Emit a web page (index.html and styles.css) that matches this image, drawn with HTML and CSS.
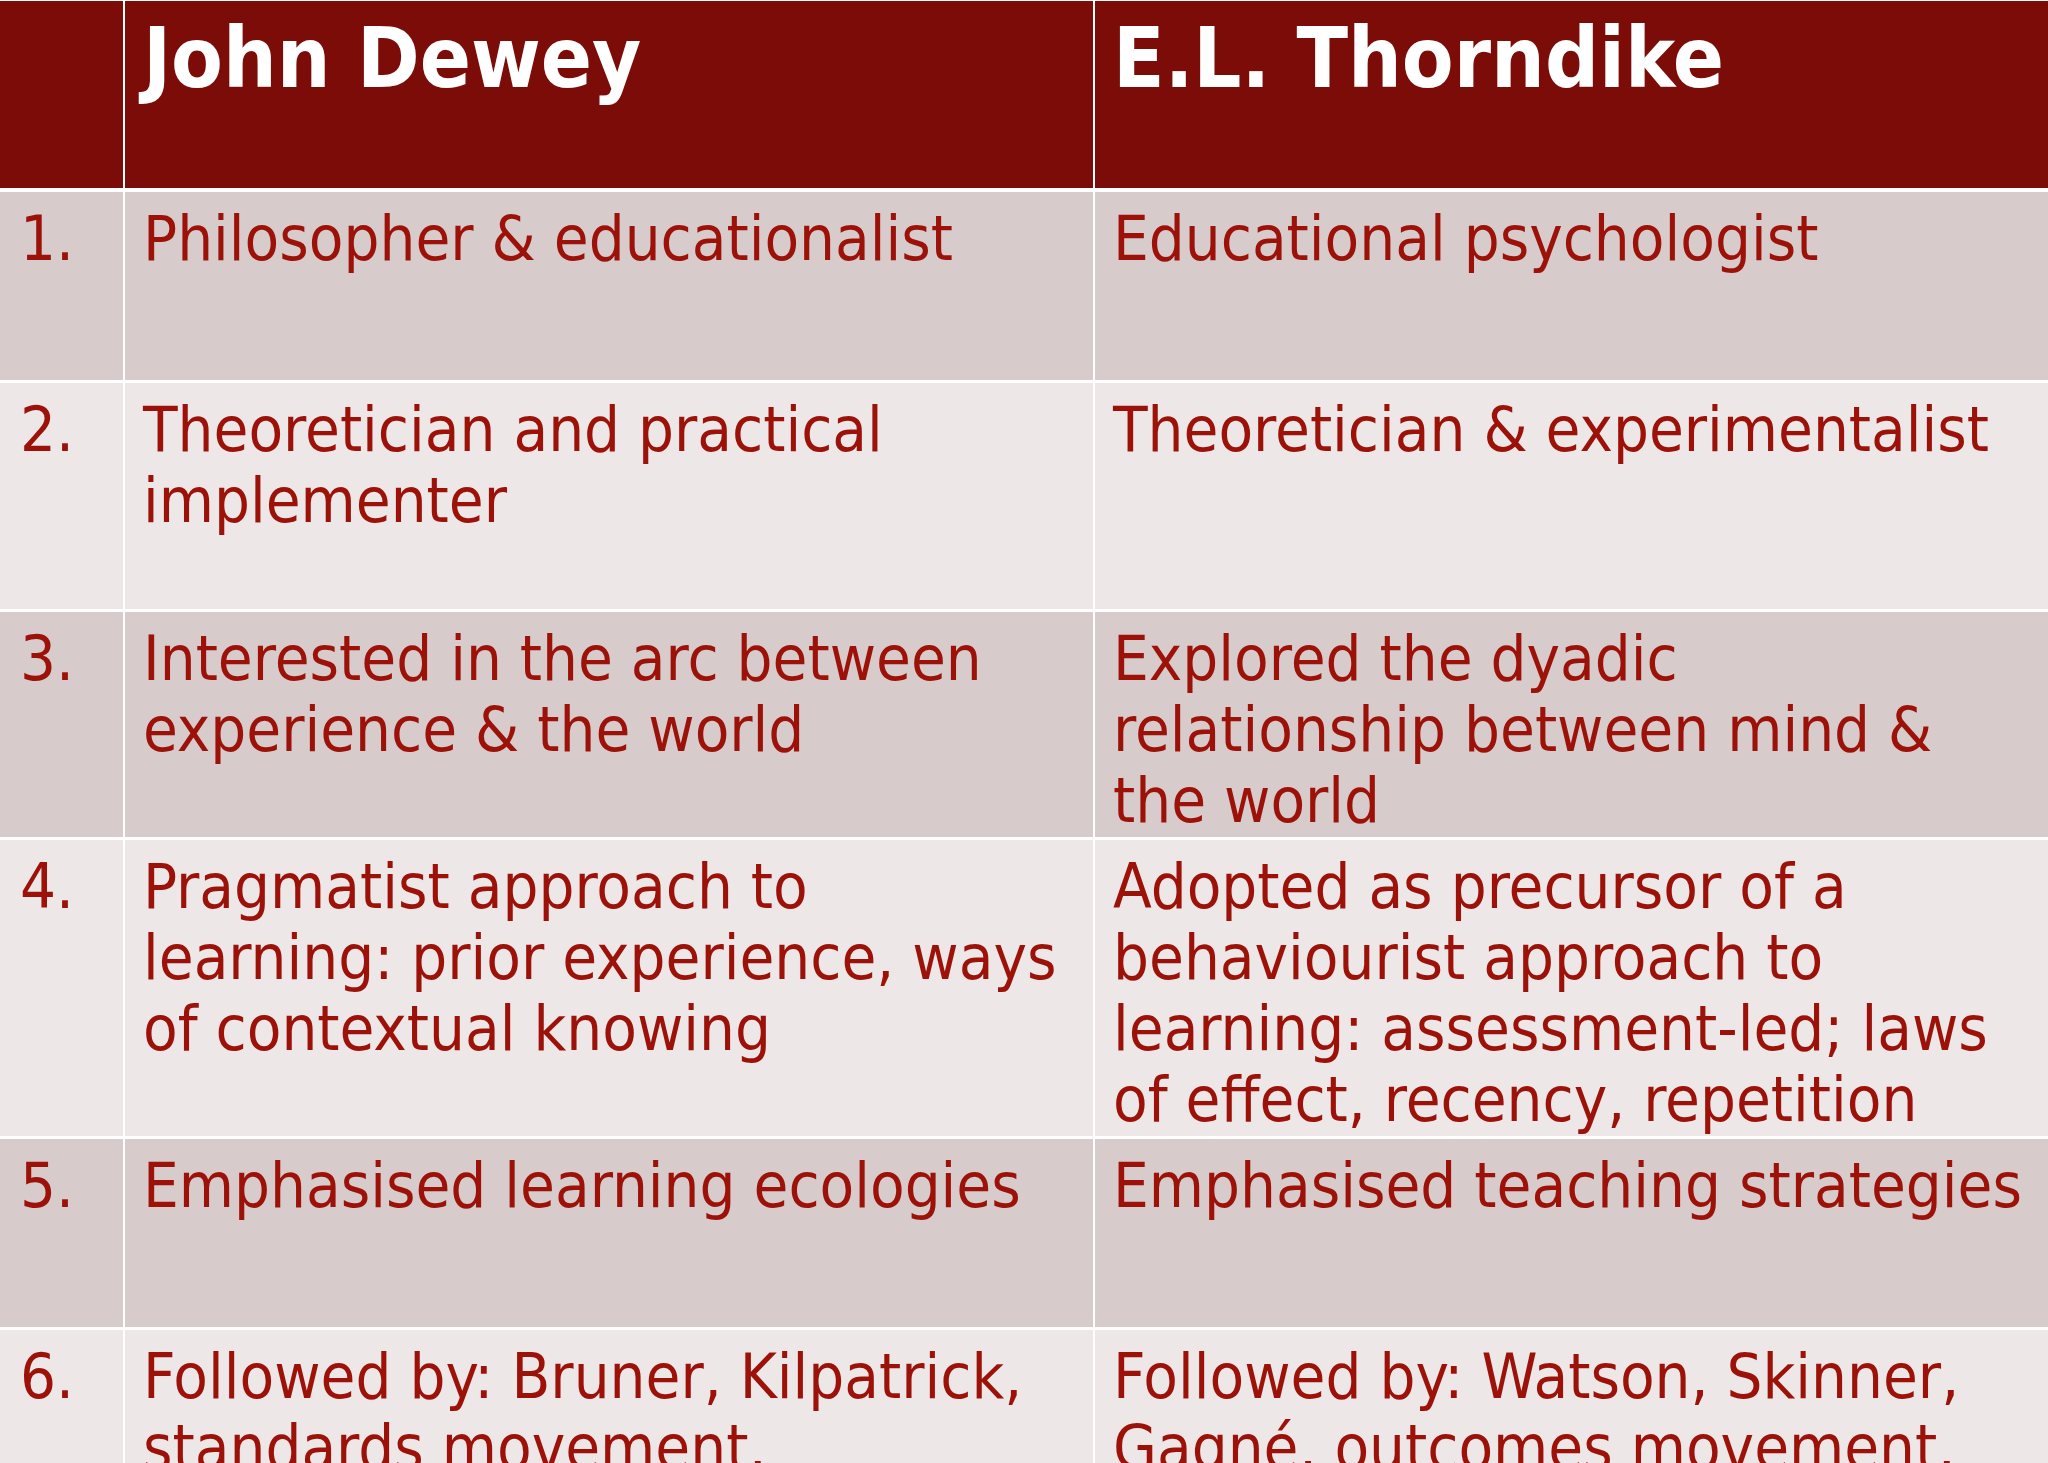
FILE: index.html
```html
<!DOCTYPE html>
<html lang="en">
<head>
<meta charset="utf-8">
<title>John Dewey vs E.L. Thorndike</title>
<link rel="stylesheet" href="styles.css">
</head>
<body>
<div class="table">
  <div class="cell head num"></div>
  <div class="cell head">John Dewey</div>
  <div class="cell head">E.L. Thorndike</div>

  <div class="cell odd num r1">1.</div>
  <div class="cell odd r1">Philosopher &amp; educationalist</div>
  <div class="cell odd r1">Educational psychologist</div>

  <div class="cell even num r2">2.</div>
  <div class="cell even r2">Theoretician and practical<br>implementer</div>
  <div class="cell even r2">Theoretician &amp; experimentalist</div>

  <div class="cell odd num r3">3.</div>
  <div class="cell odd r3">Interested in the arc between<br>experience &amp; the world</div>
  <div class="cell odd r3">Explored the dyadic<br>relationship between mind &amp;<br>the world</div>

  <div class="cell even num r4">4.</div>
  <div class="cell even r4">Pragmatist approach to<br>learning: prior experience, ways<br>of contextual knowing</div>
  <div class="cell even r4">Adopted as precursor of a<br>behaviourist approach to<br>learning: assessment-led; laws<br>of effect, recency, repetition</div>

  <div class="cell odd num r5">5.</div>
  <div class="cell odd r5">Emphasised learning ecologies</div>
  <div class="cell odd r5">Emphasised teaching strategies</div>

  <div class="cell even num r6">6.</div>
  <div class="cell even r6">Followed by: Bruner, Kilpatrick,<br>standards movement,</div>
  <div class="cell even r6">Followed by: Watson, Skinner,<br>Gagné, outcomes movement,</div>
</div>
</body>
</html>
```
FILE: styles.css
```css
html, body {
  margin: 0;
  padding: 0;
  width: 2048px;
  height: 1463px;
  overflow: hidden;
  background: #ffffff;
}

.table {
  display: grid;
  grid-template-columns: 123px 968px 1fr;
  grid-template-rows: 188px 188px 226px 225px 296px 188px 200px;
  column-gap: 2px;
  row-gap: 3px;
  padding-top: 1px;
  background: #ffffff;
  font-family: "DejaVu Sans Condensed", "DejaVu Sans", sans-serif;
  font-stretch: condensed;
}

.cell {
  padding: 11px 4px 0 18px;
  font-size: 63px;
  line-height: 71px;
  color: #9c1208;
  white-space: nowrap;
  overflow: hidden;
}

.num {
  padding-left: 20px;
}

.head {
  background: #7b0c07;
  color: #ffffff;
  font-weight: bold;
  font-size: 84px;
  line-height: 98px;
  padding-top: 8px;
  margin-bottom: 1px;
}

.odd {
  background: #d8cbcc;
}

.even {
  background: #ede7e8;
}
```
